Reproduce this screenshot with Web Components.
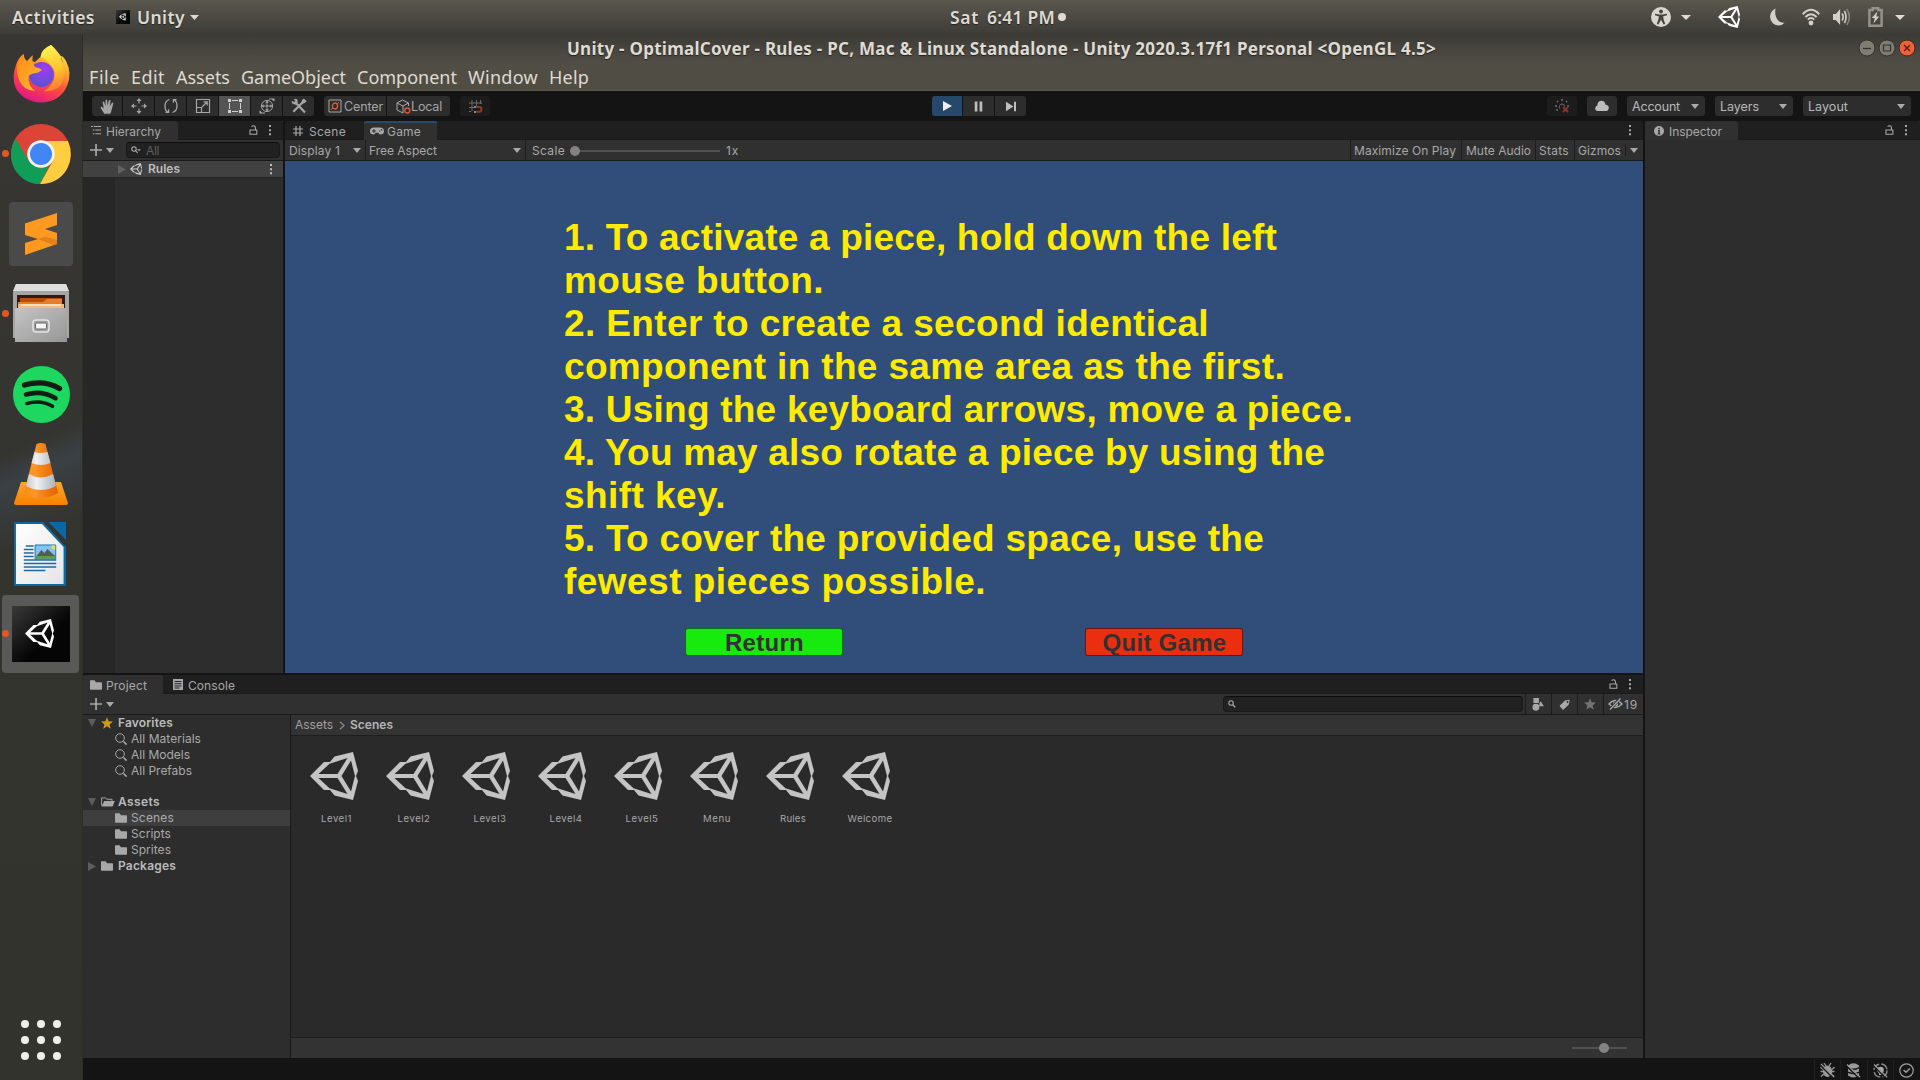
<!DOCTYPE html>
<html lang="en">
<head>
<meta charset="utf-8">
<title>Unity - OptimalCover</title>
<style>
html,body{margin:0;height:100%;background:#141414;overflow:hidden}
body{font-family:Inter,"Liberation Sans",sans-serif;font-size:12px;color:#b4b4b4}
</style>
</head>
<body>
<desktop-shell></desktop-shell>
<script>
const ICONS = {
  unity: ['0 0 48 48','<path fill-rule="evenodd" fill="currentColor" d="M0 24 14 10H20L24.5 4.5 43 0 48 19 46 24 48 29 43 48 24.500 43.500 20 38H14ZM8.500 22H27.500L37.500 6 19.500 11.800ZM8.500 26H27.500L37.500 42 19.500 36.200ZM31.500 24 41 39.500 45 24 41 8.500Z"/>'],
  down: ['0 0 10 6','<path fill="currentColor" d="M0 0H10L5 6Z"/>'],
  right: ['0 0 8 10','<path fill="currentColor" d="M0 0 8 5 0 10Z"/>'],
  kebab: ['0 0 4 12','<path fill="currentColor" d="M1 0h2v2.200H1zM1 4.500h2v2.200H1zM1 9h2v2.200H1z"/>'],
  lock: ['0 0 10 11','<path fill="none" stroke="currentColor" stroke-width="1.200" d="M1.100 5.500h7.600v4.600H1.100zM7.200 5.500V3Q7 .8 5 .8 3.500 .8 3 2"/>'],
  plus: ['0 0 12 12','<path fill="currentColor" d="M5.200 0h1.700v5.200H12v1.600H6.900V12H5.200V6.800H0V5.200h5.200z"/>'],
  search: ['0 0 12 12','<circle cx="5" cy="5" r="4.300" fill="none" stroke="currentColor"/><path d="M8.500 8.500 11.600 11.600" stroke="currentColor" stroke-width="1.600"/>'],
  find: ['0 0 8 8','<circle cx="3" cy="3" r="2.200" fill="none" stroke="currentColor" stroke-width="1.100"/><path d="M4.800 4.800 7.200 7.200" stroke="currentColor" stroke-width="1.300"/>'],
  findmenu: ['0 0 10 8','<circle cx="3" cy="3" r="2.200" fill="none" stroke="#aaa" stroke-width="1.100"/><path d="M4.800 4.800 6.600 6.800" stroke="#aaa" stroke-width="1.200"/><path fill="#aaa" d="M6.200 3.300h3.600L8 5.300z"/>'],
  folder: ['0 0 12 11','<path fill="currentColor" d="M0 1.200Q0 .4.8.4H4.500L6 2.400H11.200Q12 2.400 12 3.200V9.800Q12 10.600 11.200 10.600H.8Q0 10.600 0 9.800Z"/>'],
  folderopen: ['0 0 14 11','<path fill="none" stroke="currentColor" d="M.6 9.500V1H4.500L6 2.500H11V4.500"/><path fill="currentColor" d="M3.200 4.500H13.800L11.600 10.400H.6Z"/>'],
  star: ['0 0 12 12','<path fill="currentColor" d="M6 .2 7.600 4.300 12 4.600 8.600 7.400 9.700 11.700 6 9.300 2.300 11.700 3.400 7.400 0 4.600 4.400 4.300Z"/>'],
  hierarchy: ['0 0 11 10','<path fill="currentColor" d="M0 0h2v1.100H0zM3 0h8v1.100H3zM2 4h1.800v1.100H2zM4.800 4H11v1.100H4.800zM2 8h1.800v1.100H2zM4.800 8H11v1.100H4.800z"/>'],
  hash: ['0 0 10 10','<path stroke="currentColor" stroke-width="1.200" d="M3 0V10M7 0V10M0 3H10M0 7H10"/>'],
  pad: ['0 0 14 9','<path fill="currentColor" fill-rule="evenodd" d="M4 .5H10Q14 .5 14 4.500T10.500 8.500Q9 8.500 8.300 6.500H5.700Q5 8.500 3.500 8.500 0 8.500 0 4.500T4 .5ZM3.300 2.500v1.400H2v1.200h1.300v1.400h1.200V5.100h1.300V3.900H4.500V2.500zM9 3.900v1.300h1.300V3.900zM11 2.600v1.300h1.300V2.600z"/>'],
  console: ['0 0 10 11','<path fill="currentColor" fill-rule="evenodd" d="M0 0H10V11H0ZM1.500 2v1h7V2zM1.500 4.200v1h7v-1zM1.500 6.400v1h7v-1zM1.500 8.600v1h5v-1z"/>'],
  info: ['0 0 10 10','<circle cx="5" cy="5" r="5" fill="currentColor"/><path fill="#2d2d2d" d="M4.200 1.700h1.600v1.500H4.200zM4 4h1.800v3.400h.6v1H3.700v-1h.6V5H4z"/>'],
  hand: ['0 0 16 16','<path fill="currentColor" d="M4 15 .7 9.300Q.6 8 2 8.300L4 10.300 2.800 3.400Q3.300 2 4.400 3L5.800 7.500 5.900 1.300Q6.700 0 7.700 1.200L8 7.200 9.500 1.400Q10.600.4 11.300 1.700L10.400 7.800 12.700 4Q14 3.500 14.200 4.700L12 13 11 15.600H4.500Z"/>'],
  move: ['0 0 16 16','<path fill="currentColor" d="M8 0 10.500 3H8.600V5.500H7.400V3H5.500ZM8 16 5.500 13H7.400V10.500H8.600V13H10.500ZM0 8 3 5.500V7.400H5.500V8.600H3V10.500ZM16 8 13 10.500V8.600H10.500V7.400H13V5.500Z"/>'],
  rotate: ['0 0 16 16','<g fill="none" stroke="currentColor" stroke-width="1.300"><path d="M6.500 1.500Q2 3 2 8T5 14M2.500 14.300H5.600V11.200M9.500 14.500Q14 13 14 8T11 2M13.500 1.700H10.400V4.800"/></g>'],
  scale: ['0 0 16 16','<g fill="none" stroke="currentColor" stroke-width="1.200"><path d="M1.500 1.500H14.500V14.500H1.500ZM1.500 9.500H6.500V14.500M7 9 12 4M8.500 3.800H12.200V7.500"/></g>'],
  rect: ['0 0 16 16','<path fill="none" stroke="currentColor" d="M5 2.500H11M5 13.500H11M2.500 5V11M13.500 5V11"/><path fill="currentColor" d="M1 1h3v3H1zM12 1h3v3h-3zM1 12h3v3H1zM12 12h3v3h-3z"/>'],
  transform: ['0 0 16 16','<g fill="none" stroke="currentColor"><circle cx="8" cy="8" r="5.600"/><path d="M8 3.500V12.500M3.500 8H12.500M1 13Q3 16 6 15M15 3Q13 0 10 1"/></g><path fill="currentColor" d="M8 2.500 9.800 4.700H6.200ZM8 13.500 6.200 11.300H9.800ZM2.500 8 4.700 6.200V9.800ZM13.500 8 11.300 9.800V6.200ZM12.500 .5H15.500V3.500ZM.5 12.500 3.500 15.500H.5Z"/>'],
  tools: ['0 0 16 16','<path stroke="currentColor" stroke-width="2.200" fill="none" d="M4.500 4.500 14 14.500M12 4 2.300 13.800"/><path fill="currentColor" d="M.5 3.800 1.500 2.800 3 4.200 4.300 3 2.800 1.500Q5-.2 6.500 2L6.700 5 5 6.700 2.500 6.200Q.8 5.500 .5 3.800ZM15.700 3.200 12.800 .5 11 2.300 10.200 5 11 5.800 13.700 5Z"/>'],
  pivot: ['0 0 14 14','<path fill="none" stroke="#aaa" d="M1 1H13V13H1Z"/><ellipse cx="7" cy="7" rx="2.600" ry="3" fill="none" stroke="#e05a35" stroke-width="1.300"/><path stroke="#e05a35" d="M3 11 4.800 9M9.200 5 11 3"/>'],
  cube: ['0 0 15 15','<path fill="none" stroke="#aaa" d="M7 14 1 11V4L6.500 1 12.500 4V7M1 4 7 7 12.500 4M7 7V14"/><circle cx="11.300" cy="11.500" r="2.500" fill="none" stroke="#e05a35" stroke-width="1.300"/>'],
  snap: ['0 0 15 15','<path stroke="#6b6b6b" fill="none" d="M4 1V12M8.500 1V7M12.500 1V5M1 4H14M1 8.500H7M1 12.500H3"/><path fill="none" stroke="#8a3c28" stroke-width="2" d="M8.500 8H11.500Q13.500 8.300 13.500 10.300T11.500 12.700H8.500"/><path fill="#8c8c8c" d="M6 7h2v2H6zM6 12h2v2H6z"/>'],
  play: ['0 0 10 12','<path fill="#ededed" d="M0 0 10 6 0 12Z"/>'],
  pause: ['0 0 10 12','<path fill="#bdbdbd" d="M.8.500h3v11H.8zM6.200.500h3v11h-3z"/>'],
  step: ['0 0 12 12','<path fill="#bdbdbd" d="M1 .8 8.500 6 1 11.200zM9 .8h2v10.400H9z"/>'],
  bug: ['0 0 14 14','<g stroke="#6e6e6e" fill="none"><path d="M4.700 9.500Q3.500 5.500 7 5 9.500 5 9.500 7.500"/><path d="M7 0V2M2 2 3 3M12 2 11 3M0 7H2M12 7H14M1 11H3" stroke-width="1.600"/></g><path stroke="#8f3527" stroke-width="1.900" d="M8 8 13 13M13 8 8 13"/>'],
  cloud: ['0 0 14 12','<path fill="#bdbdbd" d="M3 11Q0 11 .2 8 .5 6 2.300 5.500 2.500 1 6.500.8 10 .8 10.500 4.700 14 5 13.800 8 13.500 11 11 11Z"/>'],
  gt: ['0 0 6 9','<path fill="none" stroke="currentColor" stroke-width="1.300" d="M1 .8 5 4.500 1 8.200"/>'],
  shapes: ['0 0 13 14','<path fill="currentColor" d="M1.500 0h6v5.500H1.500zM9.500 3.500 12.800 9H7.500Q8.500 6.500 8 5.500z"/><circle cx="4.200" cy="9.900" r="3.700" fill="currentColor"/>'],
  tag: ['0 0 12 12','<path fill="currentColor" fill-rule="evenodd" d="M6.500 1.500 11 .8Q11.700 1 11.500 2L10.800 6 5 11.500Q4.400 12 3.600 11.200L1 8.200Q.5 7.500 1.200 6.900ZM9.300 2.200a1 1 0 1 0 .1 0z"/>'],
  eye: ['0 0 15 12','<path fill="none" stroke="currentColor" stroke-width="1.300" d="M1 6Q7.500-1 14 6 7.500 13 1 6Z"/><circle cx="7.500" cy="6" r="2.600" fill="currentColor"/><path stroke="#303030" stroke-width="3" d="M2 11.500 12 .5"/><path stroke="currentColor" stroke-width="1.300" d="M2 11.500 12.500 .5"/>'],
  access: ['0 0 20 20','<circle cx="10" cy="10" r="10" fill="#d9d6cf"/><circle cx="10" cy="4.500" r="1.900" fill="#45443e"/><path fill="#45443e" d="M4 6.800 8.500 7.400H11.500L16 6.800V8.300L12.200 9.300 12.500 12 14.200 17 12.600 17.500 10 12.800 7.400 17.500 5.800 17 7.500 12 7.800 9.300 4 8.300Z"/>'],
  moon: ['0 0 16 19','<path fill="#d3d0c9" d="M6 .5Q0 3.500 0 9.500 1 17.500 9 18.500 13 18.500 15.500 15.500 11 16.500 7.500 11.500 4.500 6.500 6 .5Z"/>'],
  wifi: ['0 0 18 18','<g fill="none" stroke="#d3d0c9" stroke-width="2"><path d="M.8 6.200Q9-2.500 17.200 6.200M3.400 9Q9 3.300 14.600 9M5.800 11.600Q9 8.500 12.200 11.600"/></g><circle cx="9" cy="15" r="2.400" fill="#d3d0c9"/>'],
  volume: ['0 0 20 18','<path fill="#d3d0c9" d="M0 6H3L7.500 1V17L3 12H0Z"/><g fill="none" stroke="#d3d0c9" stroke-width="1.700"><path d="M9.500 5.500Q12 9 9.500 12.500M12 3Q15.500 9 12 15"/><path stroke="#85827a" d="M14.500 1Q20 9 14.500 17"/></g>'],
  battery: ['0 0 16 20','<path fill="none" stroke="#96938b" stroke-width="2.600" d="M5 3V1.300H11V3H14.500V18.700H1.500V3Z"/><path fill="#d3d0c9" d="M10 4.500 4 11H7.200L5.800 16.500 12 9.500H8.800Z"/>'],
  nobug: ['0 0 15 15','<ellipse cx="7.500" cy="8.200" rx="4.600" ry="5.800" fill="#999"/><path stroke="#999" stroke-width="1.300" fill="none" d="M4 0 6 3M11 0 9 3M.5 4 3 6.500M14.500 4 12 6.500M.5 8.500H14.500M1 13.500 4 11M14 13.500 11 11"/><path stroke="#141414" stroke-width="1.300" d="M.2 2.200 13 15"/><path stroke="#999" stroke-width="1.200" d="M1 1 14.200 14.200"/>'],
  nodb: ['0 0 15 15','<path fill="#999" d="M2 2.500Q7.500-1.800 13 2.500V4Q7.500 7 2 4ZM2 5.500Q7.500 8.500 13 5.500V8.500Q7.500 11 2 8.500ZM2 10Q7.500 12.500 13 10V12.500Q7.500 16.500 2 12.500Z"/><path stroke="#141414" stroke-width="1.300" d="M.5 3 12.800 15"/><path stroke="#999" stroke-width="1.200" d="M1 1.500 14.200 14.200"/>'],
  nolight: ['0 0 15 15','<circle cx="7.500" cy="7.500" r="6.500" fill="none" stroke="#888" stroke-width="1.500" stroke-dasharray="8 2.200"/><circle cx="7.500" cy="7" r="3.300" fill="#aaa"/><path fill="#aaa" d="M6 9h3v3H6z"/><path stroke="#141414" stroke-width="1.300" d="M.5 3 12.800 15"/><path stroke="#999" stroke-width="1.200" d="M1 1.500 14.200 14.200"/>'],
  okay: ['0 0 15 15','<circle cx="7.500" cy="7.500" r="6.700" fill="none" stroke="#a0a0a0" stroke-width="1.200"/><path fill="none" stroke="#a0a0a0" stroke-width="1.500" d="M4.600 7 7 9.300 10.800 5.500"/>'],
  grid9: ['0 0 40 40','<g fill="#eeeeec"><circle cx="4" cy="4" r="4"/><circle cx="20" cy="4" r="4"/><circle cx="36" cy="4" r="4"/><circle cx="4" cy="20" r="4"/><circle cx="20" cy="20" r="4"/><circle cx="36" cy="20" r="4"/><circle cx="4" cy="36" r="4"/><circle cx="20" cy="36" r="4"/><circle cx="36" cy="36" r="4"/></g>'],
  wmin: ['0 0 18 18','<circle cx="9" cy="9" r="8" fill="#7f7c73" stroke="#33322d"/><path stroke="#33322d" stroke-width="1.300" d="M5 9.500H13"/>'],
  wmax: ['0 0 18 18','<circle cx="9" cy="9" r="8" fill="#7f7c73" stroke="#33322d"/><path fill="none" stroke="#33322d" stroke-width="1.200" d="M5.500 6H12.500V12H5.500Z"/>'],
  wclose: ['0 0 18 18','<circle cx="9" cy="9" r="8" fill="#ef6237" stroke="#3a2a22"/><path stroke="#542010" stroke-width="1.300" d="M6 6 12 12M12 6 6 12"/>'],
  appunity: ['0 0 58 56','<defs><linearGradient id="g" x1="0" y1="0" x2="1" y2="1"><stop stop-color="#3a3a3a"/><stop offset=".6" stop-color="#050505"/></linearGradient></defs><path fill="url(#g)" d="M0 0H58V56H0Z"/><path fill="#fff" fill-rule="evenodd" transform="translate(13 13) scale(.604)" d="M0 24 14 10H20L24.500 4.500 43 0 48 19 46 24 48 29 43 48 24.500 43.500 20 38H14ZM8.500 22H27.500L37.500 6 19.500 11.800ZM8.500 26H27.500L37.500 42 19.500 36.200ZM31.500 24 41 39.500 45 24 41 8.500Z"/>'],
  firefox: ['0 0 57 60','<defs><linearGradient id="a" x1=".8" y1="0" x2=".35" y2="1"><stop stop-color="#fff44f"/><stop offset=".3" stop-color="#ffb42a"/><stop offset=".62" stop-color="#ff5038"/><stop offset="1" stop-color="#e31587"/></linearGradient><radialGradient id="b" cx=".6" cy=".3" r=".8"><stop stop-color="#a33af0"/><stop offset="1" stop-color="#4a55d0"/></radialGradient><linearGradient id="c" x1="0" y1="0" x2="1" y2="1"><stop stop-color="#ff8a16"/><stop offset="1" stop-color="#ffbd2e"/></linearGradient><linearGradient id="d" x1=".3" y1="0" x2=".5" y2="1"><stop stop-color="#fff653"/><stop offset=".6" stop-color="#ffc12e"/><stop offset="1" stop-color="#ff7a30"/></linearGradient></defs><path fill="url(#a)" d="M10.500 10Q5 14 3 21-2 34 3 44.500 11 58 28 58.500 47 58 54 42 59.500 29 53 17 50 12 48 12L50 19Q44 6 38 1 31 5 28.500 12L22 18 19 17 19 12 14 17Q11 15 10.500 10Z"/><circle cx="28.500" cy="30.500" r="12.500" fill="url(#b)"/><path fill="url(#d)" d="M38 1Q28 5 27.500 13 34 16 37 20 44 26 41 36 38 43 31 47 42 48 48 41 54 32 49 18L48 13 52 18Q44 6 38 1Z"/><path fill="url(#c)" d="M10.500 10Q7 14 4.500 20 3 28 6 36 11 47 22 47 15 42 15.500 32 19 29 24 29L29 26Q27 24 22 23 18 18 20 11L14 18Q11 16 10.500 10Z"/>'],
  chrome: ['0 0 60 60','<circle cx="30" cy="30" r="30" fill="#db4437"/><path fill="#0f9d58" d="M4.500 14.500 17.500 37 30 45 40 38 29 60Q12 59.500 3.500 45-4 30 4.500 14.500Z"/><path fill="#ffcd40" d="M30 17H57Q63 31 56 45 47 60 29 60L42 37Z"/><circle cx="30" cy="30" r="13.800" fill="#f3f3f3"/><circle cx="30" cy="30" r="11" fill="#4285f4"/>'],
  sublime: ['0 0 64 64','<rect width="64" height="64" rx="4" fill="#4a4a4b"/><path fill="#ff9920" d="M16 21.500 48 11V23L36 27 48 31V42L16 53V41L29 37 16 33Z"/><path fill="#e0831a" d="M29 37 36 34.500 48 38V42L44 43Z"/>'],
  files: ['0 0 56 60','<defs><linearGradient id="e" x2="1" y2="1"><stop stop-color="#c4c4c4"/><stop offset="1" stop-color="#969696"/></linearGradient></defs><path fill="#a6a6a6" d="M3 0H53L56 8V54H0V8Z"/><path fill="#dedede" d="M3 0H53L56 7H0Z"/><path fill="#2c1d14" d="M4 11H52V25H4Z"/><path fill="#b84f10" d="M7 14H49V25H7Z"/><path fill="#e0812b" d="M5 18H30L34 15H49V25H5Z"/><path fill="#f0bd78" d="M5 20H51V25H5Z"/><path stroke="#fff" d="M8 21H48"/><path fill="url(#e)" d="M2 26Q2 24 4 24H52Q54 24 54 26V58H2Z"/><rect x="20" y="36" width="16" height="12" rx="3" fill="#a3a3a3" stroke="#e3e3e3" stroke-width="1.500"/><rect x="22.500" y="39" width="11" height="6" rx="1" fill="#f5f5f5" stroke="#666"/>'],
  spotify: ['0 0 57 57','<circle cx="28.500" cy="28.500" r="28.500" fill="#1ed760"/><g fill="none" stroke="#121c15" stroke-linecap="round"><path stroke-width="5.400" d="M11.500 19Q31 13.500 46.500 22.500"/><path stroke-width="4.600" d="M13 28.500Q29 24 42.500 32.200"/><path stroke-width="3.600" d="M14 37.500Q28 33.500 39.500 40.300"/></g>'],
  vlc: ['0 0 54 62','<defs><linearGradient id="h" x2="0" y2="1"><stop stop-color="#ffa62c"/><stop offset="1" stop-color="#f78000"/></linearGradient><linearGradient id="i"><stop stop-color="#c8c8c8"/><stop offset=".35" stop-color="#f0f0f0"/><stop offset="1" stop-color="#a9b2ba"/></linearGradient><linearGradient id="j"><stop stop-color="#f78a15"/><stop offset=".3" stop-color="#ff9628"/><stop offset="1" stop-color="#de6000"/></linearGradient></defs><path fill="url(#h)" d="M7 39H47L54 60Q54 62 52 62H2Q0 62 0 60Z"/><path fill="url(#j)" d="M22.500 1Q27 -1 31.500 1L44 50Q27 60 10 50Z"/><path fill="url(#i)" d="M20.500 9Q27 11 33.500 9L36.500 20Q27 24 17.500 20ZM15 31Q27 38 39 31L42 43Q27 51 12 43Z"/>'],
  writer: ['0 0 54 64','<defs><linearGradient id="k" x2="1" y2="1"><stop stop-color="#fff"/><stop offset="1" stop-color="#e5e5e5"/></linearGradient></defs><path fill="#0c68a5" d="M0 0H30L53 25V64H0Z"/><path fill="#0c68a5" d="M35 0H53V18Z"/><path fill="url(#k)" d="M2 2H28.500L50.500 25V62H2Z"/><g stroke="#1b69a8" stroke-width="1.400"><path d="M12 24H20M10 27.500H20M10 31H20M10 34.500H20M10 38H43M10 41.500H43M10 45H43M10 48.500H32"/></g><path fill="#7fc5f0" stroke="#1f6fa8" d="M21.500 23H42.500V37H21.500Z"/><path fill="#535d55" d="M22 35 28 28 31 31 34 27 42 34V35Z"/><path fill="#5ba135" d="M22 34H42V36.500H22Z"/><path fill="#f8dc37" d="M38 23.500H42V28Q38 27 38 23.500Z"/>']
};

/* Registers a custom element whose shadow root is cloned from a template. */
function define(name, css, html, setup) {
  customElements.define(name, class extends HTMLElement {
    constructor() {
      super();
      const t = document.createElement('template');
      t.innerHTML = `<style>*{box-sizing:border-box}${css}</style>${typeof html === 'function' ? html(this) : html}`;
      this.attachShadow({mode: 'open'}).append(t.content.cloneNode(true));
    }
    connectedCallback() { if (setup) setup(this); }
  });
}

/* Vector icon: name, w, h. */
define('ui-icon', ':host{display:block;flex:none;line-height:0}svg{display:block;overflow:visible}', el => {
  const [vb, body] = ICONS[el.getAttribute('name')];
  return `<svg width="${el.getAttribute('w')}" height="${el.getAttribute('h')}" viewBox="${vb}" preserveAspectRatio="none">${body}</svg>`;
});

/* Single-line label tracked to an exact width (w). */
define('fit-text', ':host{display:block;flex:none;white-space:pre}span{display:inline-block}', '<span><slot></slot></span>', el => {
  const w = +el.getAttribute('w');
  el.style.width = w + 'px';
  const s = el.shadowRoot.querySelector('span');
  s.style.letterSpacing = '0px';
  const d = (w + 1 - s.getBoundingClientRect().width) / el.textContent.length;
  s.style.letterSpacing = d.toFixed(3) + 'px';
});

define('top-bar', `
:host{display:flex;align-items:center;height:34px;background:linear-gradient(#5a574e,#3d3c37);color:#dfdbd2;font:600 17.500px/28px "Noto Sans","Open Sans",sans-serif;text-shadow:0 1px 1px #222}
fit-text{padding-bottom:1px}
.dot{width:8px;height:8px;border-radius:50%;background:#dfdbd2}`, `
<fit-text w="82" style="margin-left:12px">Activities</fit-text>
<ui-icon name="appunity" w="14" h="14" style="margin-left:22px"></ui-icon>
<fit-text w="47" style="margin-left:7px">Unity</fit-text>
<ui-icon name="down" w="9" h="5" style="margin-left:6px"></ui-icon>
<fit-text w="28" style="margin-left:751px">Sat</fit-text>
<fit-text w="67" style="margin-left:9px">6:41 PM</fit-text>
<div class="dot" style="margin-left:4px"></div>
<ui-icon name="access" w="20" h="20" style="margin-left:585px"></ui-icon>
<ui-icon name="down" w="10" h="5" style="margin-left:10px"></ui-icon>
<ui-icon name="unity" w="22" h="22" style="margin-left:27px;color:#fff"></ui-icon>
<ui-icon name="moon" w="15" h="18" style="margin-left:30px"></ui-icon>
<ui-icon name="wifi" w="18" h="18" style="margin-left:17px"></ui-icon>
<ui-icon name="volume" w="19" h="18" style="margin-left:13px"></ui-icon>
<ui-icon name="battery" w="15" h="20" style="margin-left:16px"></ui-icon>
<ui-icon name="down" w="10" h="5" style="margin-left:12px"></ui-icon>`);

define('dock-item', `
:host{display:grid;place-items:center;position:relative;height:80px}
:host([active])::before{content:"";position:absolute;inset:1px 3px 1px 2px;border-radius:4px;background:#595957}
:host([running])::after{content:"";position:absolute;left:2px;top:36px;width:7px;height:7px;border-radius:50%;background:#e95420}
ui-icon{z-index:1}`, el => `<ui-icon name="${el.getAttribute('icon')}" w="${el.getAttribute('w')}" h="${el.getAttribute('h')}"></ui-icon>`);

define('app-dock', `
:host{display:flex;flex-direction:column;width:83px;background:linear-gradient(155deg,transparent 0 39%,#3a4045 42%,transparent 48%),linear-gradient(#373633,#34342f 50%,#33332e);border-right:1px solid #2c2c29}
.apps{margin:auto 0 20px 21px}`, `
<dock-item icon="firefox" w="57" h="60"></dock-item>
<dock-item icon="chrome" w="60" h="60" running></dock-item>
<dock-item icon="sublime" w="64" h="64"></dock-item>
<dock-item icon="files" w="56" h="60" running></dock-item>
<dock-item icon="spotify" w="57" h="57"></dock-item>
<dock-item icon="vlc" w="54" h="62"></dock-item>
<dock-item icon="writer" w="53" h="64" style="padding-right:2px"></dock-item>
<dock-item icon="appunity" w="58" h="56" running active></dock-item>
<ui-icon class="apps" name="grid9" w="40" h="40"></ui-icon>`);

define('window-header', `
:host{display:block;height:57px;background:linear-gradient(#3b3a35,#504d45 28px);color:#dfdbd2;border-bottom:1px solid #5a574d}
.title{display:flex;align-items:center;height:28px;font:700 17px/28px "Noto Sans","Open Sans",sans-serif;text-shadow:0 1px 1px #222}
.title fit-text{padding-top:2px}
.menu{display:flex;height:28px;font:400 18px/29px "Noto Sans","Open Sans",sans-serif;padding:1px 0 0 6px;gap:12px}`, `
<div class="title"><fit-text w="868" style="margin-left:484px">Unity - OptimalCover - Rules - PC, Mac &amp; Linux Standalone - Unity 2020.3.17f1 Personal &lt;OpenGL 4.5&gt;</fit-text>
<ui-icon name="wmin" w="18" h="18" style="margin-left:423px"></ui-icon><ui-icon name="wmax" w="18" h="18" style="margin-left:2px"></ui-icon><ui-icon name="wclose" w="18" h="18" style="margin-left:2px"></ui-icon></div>
<div class="menu"><fit-text w="30">File</fit-text><fit-text w="33">Edit</fit-text><fit-text w="53">Assets</fit-text><fit-text w="104">GameObject</fit-text><fit-text w="99">Component</fit-text><fit-text w="69">Window</fit-text><fit-text w="39">Help</fit-text></div>`);

define('tool-button', `
:host{display:flex;align-items:center;justify-content:center;height:20px;background:#2d2d2d;color:#a5a5a5;flex:none}
:host([first]){border-radius:3px 0 0 3px}:host([last]){border-radius:0 3px 3px 0}:host([solo]){border-radius:3px}
:host([on]){background:#545454;color:#d0d0d0}:host([playing]){background:#25486b}:host([off]){background:#1c1c1c}`, '<slot></slot>');

define('drop-button', `
:host{display:flex;align-items:center;height:20px;background:#2d2d2d;border-radius:3px;padding:0 6px 0 5px;color:#b8b8b8;flex:none}
ui-icon{margin-left:auto;color:#aaa}`, '<slot></slot><ui-icon name="down" w="8" h="5"></ui-icon>');

define('editor-toolbar', `
:host{display:flex;height:30px;padding-top:5px;background:#141414;font-size:12.500px;line-height:20px}
fit-text{padding-top:1px}
.g{display:flex;gap:1px}`, `
<div class="g" style="margin-left:9px">
<tool-button first style="width:30px"><ui-icon name="hand" w="15" h="15"></ui-icon></tool-button>
<tool-button style="width:31px"><ui-icon name="move" w="16" h="16"></ui-icon></tool-button>
<tool-button style="width:31px"><ui-icon name="rotate" w="16" h="16"></ui-icon></tool-button>
<tool-button style="width:31px"><ui-icon name="scale" w="16" h="16"></ui-icon></tool-button>
<tool-button on style="width:31px"><ui-icon name="rect" w="16" h="16"></ui-icon></tool-button>
<tool-button style="width:31px"><ui-icon name="transform" w="16" h="16"></ui-icon></tool-button>
<tool-button last style="width:31px"><ui-icon name="tools" w="16" h="16"></ui-icon></tool-button></div>
<div class="g" style="margin-left:10px">
<tool-button first style="width:62px"><ui-icon name="pivot" w="14" h="14"></ui-icon><fit-text w="38" style="margin-left:2px">Center</fit-text></tool-button>
<tool-button last style="width:63px"><ui-icon name="cube" w="15" h="15"></ui-icon><fit-text w="30">Local</fit-text></tool-button></div>
<tool-button solo off style="width:30px;margin-left:10px"><ui-icon name="snap" w="15" h="15"></ui-icon></tool-button>
<div class="g" style="margin-left:442px">
<tool-button first playing style="width:30px"><ui-icon name="play" w="9" h="10"></ui-icon></tool-button>
<tool-button style="width:31px"><ui-icon name="pause" w="9" h="11"></ui-icon></tool-button>
<tool-button last style="width:31px"><ui-icon name="step" w="12" h="11"></ui-icon></tool-button></div>
<tool-button solo off style="width:30px;margin-left:521px"><ui-icon name="bug" w="14" h="14"></ui-icon></tool-button>
<tool-button solo style="width:30px;margin-left:10px"><ui-icon name="cloud" w="14" h="12"></ui-icon></tool-button>
<drop-button style="width:78px;margin-left:10px"><fit-text w="47">Account</fit-text></drop-button>
<drop-button style="width:78px;margin-left:10px"><fit-text w="38">Layers</fit-text></drop-button>
<drop-button style="width:108px;margin-left:10px"><fit-text w="39">Layout</fit-text></drop-button>`);

define('tab-strip', `
:host{display:flex;align-items:center;height:19px;background:#1f1f1f;border-radius:3px 3px 0 0;line-height:18px;color:#a8a8a8;box-shadow:inset 0 -1px #1b1b1b}
.end{display:flex;margin-left:auto;padding-bottom:1px;align-items:center}`, `<slot></slot><div class="end"><slot name="end"></slot></div>`);
define('panel-tab', `
:host{display:flex;align-items:center;height:19px;flex:none}
::slotted(fit-text){padding-top:2px}
:host([active]){background:#303030;border-radius:3px 3px 0 0}
:host([focused]){border-radius:2px 2px 0 0;box-shadow:inset 0 2px #27496d}`, '<slot></slot>');
define('tool-row', `:host{display:flex;align-items:center;height:21px;background:#303030;border-bottom:1px solid #1a1a1a;line-height:20px;color:#a8a8a8}
::slotted(fit-text){padding-top:1px}`, '<slot></slot>');
define('search-box', `:host{display:flex;align-items:center;height:16px;border-radius:4px;background:#212121;border:1px solid #191919;border-top-color:#0d0d0d;line-height:14px;color:#5f5f5f;padding-left:4px}`, '<slot></slot>');
define('v-line', `:host{display:block;width:1px;height:20px;background:#1d1d1d;flex:none}`, '');
define('slider-bar', `
:host{display:block;position:relative;height:10px;flex:none}
.t{position:absolute;left:0;right:0;top:4px;height:2px;background:#525252}
.k{position:absolute;top:0;width:10px;height:10px;border-radius:50%;background:#828282}`, el => `<div class="t"></div><div class="k" style="left:${el.getAttribute('at')}px"></div>`);

define('hierarchy-panel', `
:host{display:flex;flex-direction:column;width:200px;background:#2d2d2d}
.row{display:flex;align-items:center;height:16px;background:#414141;line-height:16px;font-weight:600;color:#bdbdbd}
.body{flex:1;display:flex;border-top:1px solid #242424}.strip{width:32px;background:#272727}`, `
<tab-strip><panel-tab active style="width:95px"><ui-icon name="hierarchy" w="10" h="9" style="margin-left:8px"></ui-icon><fit-text w="54" style="margin-left:5px">Hierarchy</fit-text></panel-tab>
<ui-icon slot="end" name="lock" w="9" h="10" style="margin-right:10px"></ui-icon><ui-icon slot="end" name="kebab" w="4" h="11" style="margin-right:11px"></ui-icon></tab-strip>
<tool-row><ui-icon name="plus" w="12" h="12" style="margin-left:7px"></ui-icon><ui-icon name="down" w="8" h="5" style="margin-left:4px"></ui-icon>
<search-box style="width:154px;margin-left:12px"><ui-icon name="findmenu" w="10" h="8"></ui-icon><fit-text w="12" style="margin-left:5px;padding-top:1px">All</fit-text></search-box></tool-row>
<div class="row"><ui-icon name="right" w="8" h="9" style="margin-left:35px;color:#626262"></ui-icon><ui-icon name="unity" w="12" h="12" style="margin-left:4px;color:#ccc"></ui-icon><fit-text w="31" style="margin-left:6px">Rules</fit-text><ui-icon name="kebab" w="4" h="11" style="margin-left:90px"></ui-icon></div>
<div class="body"><div class="strip"></div></div>`);

define('game-button', `
:host{display:flex;justify-content:center;width:158px;height:28px;border-radius:3px;border:1px solid #0008;font:700 24px/27px "Liberation Sans",Arial,sans-serif;color:#323232}`, '<slot></slot>');

define('game-view', `
:host{display:block;flex:1;background:#314d79;padding:55px 0 0 279px;color:#ffeb00;font:700 37px/43px "Liberation Sans",Arial,sans-serif}
.b{display:flex;gap:242px;margin:25px 0 0 121px}`, `
<fit-text w="712">1. To activate a piece, hold down the left</fit-text>
<fit-text w="259">mouse button.</fit-text>
<fit-text w="644">2. Enter to create a second identical</fit-text>
<fit-text w="720">component in the same area as the first.</fit-text>
<fit-text w="788">3. Using the keyboard arrows, move a piece.</fit-text>
<fit-text w="760">4. You may also rotate a piece by using the</fit-text>
<fit-text w="161">shift key.</fit-text>
<fit-text w="699">5. To cover the provided space, use the</fit-text>
<fit-text w="421">fewest pieces possible.</fit-text>
<div class="b"><game-button style="background:#17eb0d"><fit-text w="78">Return</fit-text></game-button><game-button style="background:#ec2e10"><fit-text w="123">Quit Game</fit-text></game-button></div>`);

define('game-panel', `:host{display:flex;flex-direction:column;width:1358px}`, `
<tab-strip><panel-tab style="width:79px"><ui-icon name="hash" w="10" h="10" style="margin-left:8px"></ui-icon><fit-text w="36" style="margin-left:6px">Scene</fit-text></panel-tab>
<panel-tab active focused style="width:73px"><ui-icon name="pad" w="14" h="8" style="margin-left:6px"></ui-icon><fit-text w="33" style="margin-left:3px">Game</fit-text></panel-tab>
<ui-icon slot="end" name="kebab" w="4" h="11" style="margin-right:11px"></ui-icon></tab-strip>
<tool-row><fit-text w="50" style="margin-left:4px">Display 1</fit-text><ui-icon name="down" w="8" h="5" style="margin-left:14px"></ui-icon><v-line style="margin-left:4px"></v-line>
<fit-text w="67" style="margin-left:3px">Free Aspect</fit-text><ui-icon name="down" w="8" h="5" style="margin-left:77px"></ui-icon><v-line style="margin-left:4px"></v-line>
<fit-text w="32" style="margin-left:6px">Scale</fit-text><slider-bar at="0" style="width:150px;margin-left:6px;margin-top:1px"></slider-bar><fit-text w="12" style="margin-left:6px">1x</fit-text>
<v-line style="margin-left:612px"></v-line><fit-text w="101" style="margin-left:3px">Maximize On Play</fit-text>
<v-line style="margin-left:6px"></v-line><fit-text w="64" style="margin-left:4px">Mute Audio</fit-text>
<v-line style="margin-left:5px"></v-line><fit-text w="29" style="margin-left:3px">Stats</fit-text>
<v-line style="margin-left:6px"></v-line><fit-text w="42" style="margin-left:3px">Gizmos</fit-text>
<v-line style="margin-left:5px;height:12px"></v-line><ui-icon name="down" w="8" h="5" style="margin-left:4px"></ui-icon></tool-row>
<game-view></game-view>`);

define('inspector-panel', `:host{display:block;width:275px;background:#2d2d2d}`, `
<tab-strip><panel-tab active style="width:93px"><ui-icon name="info" w="10" h="10" style="margin-left:9px"></ui-icon><fit-text w="52" style="margin-left:5px">Inspector</fit-text></panel-tab>
<ui-icon slot="end" name="lock" w="9" h="10" style="margin-right:10px"></ui-icon><ui-icon slot="end" name="kebab" w="4" h="11" style="margin-right:12px"></ui-icon></tab-strip>`);

define('tree-row', `
:host{display:flex;align-items:center;height:16px;padding-left:32px;line-height:16px;color:#aaa}
:host([root]){padding-left:5px;font-weight:600;color:#bbb}
:host([selected]){background:#3e3e3e}
.tw{width:8px;color:#5c5c5c;margin-right:5px}
.ic{margin-right:4px;color:#a8a8a8}
:host([root]) .ic{width:13px}
.ic.gold{color:#cf9a14}`, el => {
  const tw = el.getAttribute('twist'), ic = el.getAttribute('icon');
  return (tw ? `<ui-icon class="tw" name="${tw}" w="8" h="${tw === 'down' ? 8 : 9}"></ui-icon>` : '') +
    `<ui-icon class="ic ${ic === 'star' ? 'gold' : ''}" name="${ic}" w="${ic === 'folderopen' ? 14 : 12}" h="${ic.startsWith('folder') ? 10 : 12}"></ui-icon><slot></slot>`;
});

define('asset-item', `
:host{display:flex;flex-direction:column;align-items:center;width:76px;color:#c4c4c4}
ui-icon{margin-right:4px}.n{margin-top:12px;font-size:9.600px;line-height:14px;color:#a8a8a8}`,
  '<ui-icon name="unity" w="48" h="48"></ui-icon><div class="n"><slot></slot></div>');

define('project-panel', `
:host{display:flex;flex-direction:column;height:383px;background:#2d2d2d}
.main{display:flex;flex:1}
.tree{width:208px;border-right:1px solid #1a1a1a}
.files{flex:1;display:flex;flex-direction:column;background:#2a2a2a}
.crumb{display:flex;align-items:center;height:21px;background:#333;border-bottom:1px solid #1e1e1e;line-height:20px;color:#a0a0a0}
.grid{display:flex;flex:1;padding:16px 0 0 7px}
.grid asset-item:nth-child(n+2) fit-text{margin-left:3px}
.grid asset-item:nth-child(n+6) fit-text{margin-left:1px}
.foot{height:21px;background:#333;border-top:1px solid #1e1e1e;display:flex;align-items:center}
.i{display:grid;place-items:center;width:25px;padding-right:1px}`, `
<tab-strip><panel-tab active style="width:80px"><ui-icon name="folder" w="12" h="10" style="margin-left:7px"></ui-icon><fit-text w="40" style="margin-left:4px">Project</fit-text></panel-tab>
<panel-tab style="width:80px"><ui-icon name="console" w="10" h="11" style="margin-left:10px"></ui-icon><fit-text w="46" style="margin-left:5px">Console</fit-text></panel-tab>
<ui-icon slot="end" name="lock" w="9" h="10" style="margin-right:10px"></ui-icon><ui-icon slot="end" name="kebab" w="4" h="11" style="margin-right:11px"></ui-icon></tab-strip>
<tool-row><ui-icon name="plus" w="12" h="12" style="margin-left:7px"></ui-icon><ui-icon name="down" w="8" h="5" style="margin-left:4px"></ui-icon>
<search-box style="width:300px;margin-left:1109px"><ui-icon name="find" w="8" h="8" style="color:#aaa"></ui-icon></search-box>
<v-line style="margin-left:2px"></v-line><div class="i"><ui-icon name="shapes" w="12" h="13"></ui-icon></div>
<v-line></v-line><div class="i"><ui-icon name="tag" w="11" h="11"></ui-icon></div>
<v-line></v-line><div class="i" style="color:#737373"><ui-icon name="star" w="12" h="12"></ui-icon></div>
<v-line></v-line><ui-icon name="eye" w="15" h="12" style="margin-left:4px"></ui-icon><fit-text w="13" style="margin-left:1px">19</fit-text></tool-row>
<div class="main"><div class="tree">
<tree-row root twist="down" icon="star"><fit-text w="54">Favorites</fit-text></tree-row>
<tree-row icon="search"><fit-text w="69">All Materials</fit-text></tree-row>
<tree-row icon="search"><fit-text w="58">All Models</fit-text></tree-row>
<tree-row icon="search"><fit-text w="60">All Prefabs</fit-text></tree-row>
<div style="height:15px"></div>
<tree-row root twist="down" icon="folderopen"><fit-text w="41">Assets</fit-text></tree-row>
<tree-row selected icon="folder"><fit-text w="42">Scenes</fit-text></tree-row>
<tree-row icon="folder"><fit-text w="39">Scripts</fit-text></tree-row>
<tree-row icon="folder"><fit-text w="39">Sprites</fit-text></tree-row>
<tree-row root twist="right" icon="folder"><fit-text w="57">Packages</fit-text></tree-row>
</div><div class="files">
<div class="crumb"><fit-text w="37" style="margin-left:4px">Assets</fit-text><ui-icon name="gt" w="6" h="9" style="margin-left:7px;color:#888"></ui-icon><fit-text w="42" style="margin-left:5px;font-weight:600;color:#b4b4b4">Scenes</fit-text></div>
<div class="grid">
<asset-item><fit-text w="30">Level1</fit-text></asset-item><asset-item><fit-text w="32">Level2</fit-text></asset-item><asset-item><fit-text w="32">Level3</fit-text></asset-item><asset-item><fit-text w="32">Level4</fit-text></asset-item><asset-item><fit-text w="32">Level5</fit-text></asset-item><asset-item><fit-text w="27">Menu</fit-text></asset-item><asset-item><fit-text w="25">Rules</fit-text></asset-item><asset-item><fit-text w="44" style="margin-left:3px">Welcome</fit-text></asset-item></div>
<div class="foot"><slider-bar at="27" style="width:55px;margin-left:1281px"></slider-bar></div>
</div></div>`);

define('status-bar', `:host{display:flex;align-items:center;justify-content:flex-end;height:22px;background:#141414;padding-top:2px}
ui-icon{margin:0 5px 0 5px}v-line{background:#202020}`, `
<v-line></v-line><ui-icon name="nobug" w="15" h="15"></ui-icon><v-line></v-line><ui-icon name="nodb" w="15" h="15"></ui-icon><v-line style="margin-left:1px"></v-line><ui-icon name="nolight" w="15" h="15"></ui-icon><v-line></v-line><ui-icon name="okay" w="15" h="15"></ui-icon><div style="width:1px"></div>`);

define('desktop-shell', `
:host{display:flex;flex-direction:column;width:1920px;height:1080px}
.r{display:flex;flex:1;min-height:0}
.app{flex:1;display:flex;flex-direction:column;min-width:0}
.work{display:flex;flex:1;gap:2px;min-height:0;background:#141414}
.left{display:flex;flex-direction:column;width:1560px;gap:2px}
.up{display:flex;gap:2px;height:552px}`, `
<top-bar></top-bar>
<div class="r"><app-dock></app-dock><div class="app">
<window-header></window-header><editor-toolbar></editor-toolbar>
<div class="work"><div class="left"><div class="up"><hierarchy-panel></hierarchy-panel><game-panel></game-panel></div><project-panel></project-panel></div><inspector-panel></inspector-panel></div>
<status-bar></status-bar></div></div>`);
</script>
</body>
</html>
